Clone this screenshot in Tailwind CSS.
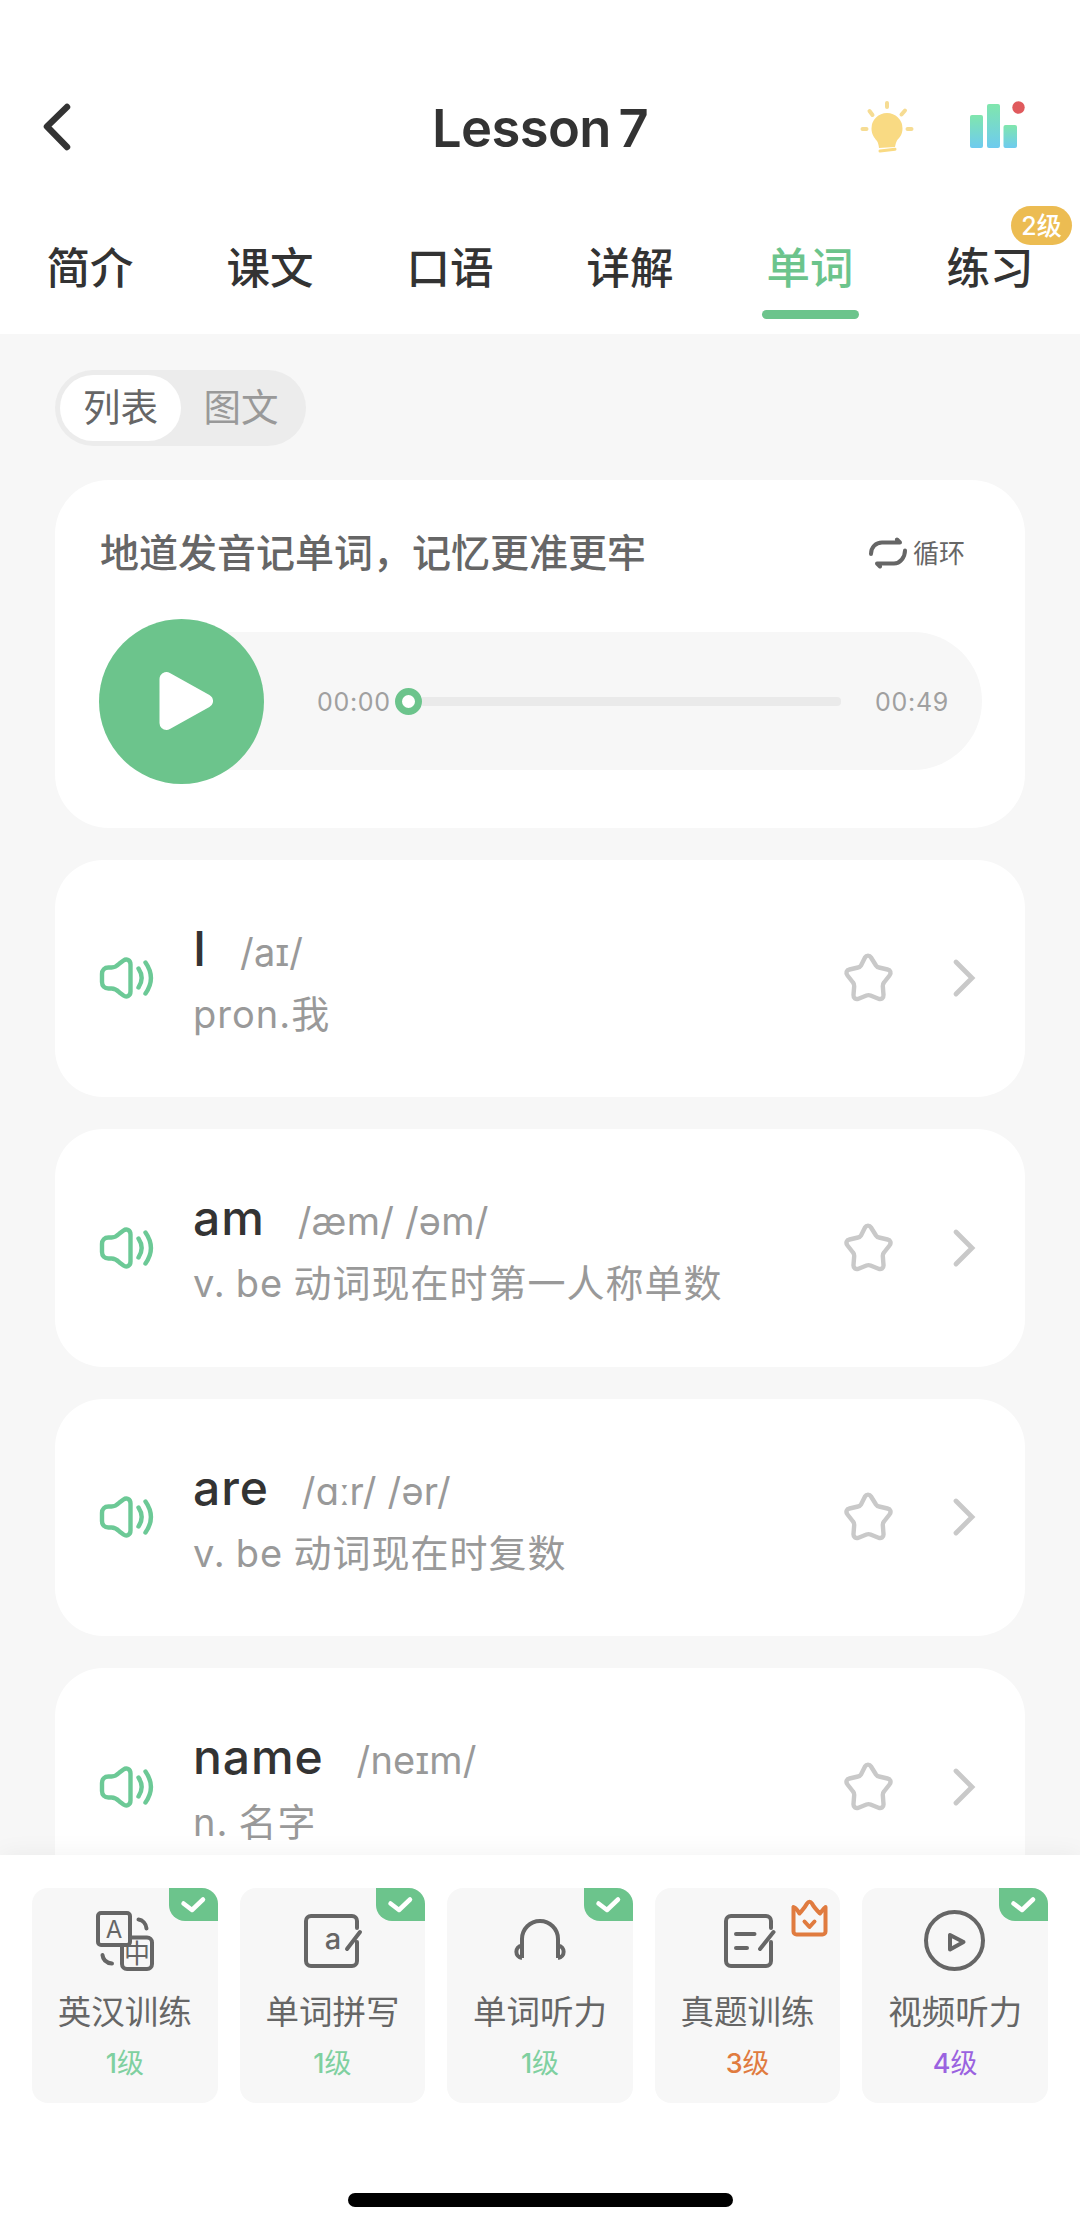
<!DOCTYPE html>
<html lang="zh-CN">
<head>
  <meta charset="UTF-8" />
  <meta name="viewport" content="width=device-width, initial-scale=1.0"/>
  <title>Lesson 7</title>
  <script src="https://cdn.jsdelivr.net/npm/@tailwindcss/browser@4"></script>
</head>
<body class="bg-[#f7f7f7] font-['Inter','Noto_Sans_CJK_SC',sans-serif] text-[#333]">
<div class="w-[1080px] h-[2228px] flex flex-col overflow-hidden">

  <!-- Header -->
  <header class="h-[334px] shrink-0 bg-white flex flex-col">
    <div class="mt-[84px] h-[88px] grid grid-cols-3 items-center">
      <svg class="ml-9 w-11 h-14" viewBox="0 0 44 56" fill="none" stroke="#333" stroke-width="6.5" stroke-linecap="round" stroke-linejoin="round"><path d="M31 7 11 26.500 31 47"/></svg>
      <h1 class="pt-px text-[52.500px] leading-none font-semibold text-center whitespace-nowrap tracking-[-0.6px] [word-spacing:-5px]">Lesson 7</h1>
      <div class="flex items-center justify-end pr-[52px] gap-[54px]">
        <svg class="w-14 h-14" viewBox="0 0 56 56" fill="none">
          <path d="M29 13a15.500 15.500 0 0 1 15.500 15.500c0 6-3 9-5.500 12-1 2-1.500 4-2 6.500L21 48c-.3-3-.8-5-2-7-3-3.500-5.500-7-5.500-12.500A15.500 15.500 0 0 1 29 13z" fill="#f9da83"/>
          <path d="M22 51 37 49.200" stroke="#f9da83" stroke-width="3" stroke-linecap="round"/>
          <path d="M29 3v4M11.500 11l3 4M47 10.500l-3.500 4M4.500 29h4M49.500 29h4" stroke="#f6dc93" stroke-width="4" stroke-linecap="round"/>
        </svg>
        <svg class="w-[60px] h-14" viewBox="0 0 60 56">
          <defs><linearGradient id="bars" x1="0" y1="0" x2="0" y2="1"><stop offset="0" stop-color="#80e6ad"/><stop offset="1" stop-color="#6ecbef"/></linearGradient></defs>
          <rect x="2" y="15" width="13" height="33" rx="2" fill="url(#bars)"/>
          <rect x="19" y="4" width="13" height="44" rx="2" fill="url(#bars)"/>
          <rect x="35.500" y="25" width="13.500" height="23" rx="2" fill="url(#bars)"/>
          <circle cx="50.500" cy="7.500" r="6.200" fill="#e05a5d"/>
        </svg>
      </div>
    </div>
    <!-- Tabs -->
    <nav class="mt-[64px] grid grid-cols-6 text-[43.500px] leading-[64px] font-medium text-center">
      <a>简介</a>
      <a>课文</a>
      <a>口语</a>
      <a>详解</a>
      <a class="text-[#6cc48c] flex flex-col items-center">单词<span class="mt-[10px] w-[97px] h-[9px] rounded-full bg-[#6cc48c]"></span></a>
      <a class="relative">练习<span class="absolute right-2 -top-[30px] w-[61px] h-[39px] rounded-full bg-[#ecbc52] text-white text-[25px] leading-[40px]">2级</span></a>
    </nav>
  </header>

  <main class="flex-1 min-h-0 overflow-hidden px-[55px] pt-9">
    <!-- List / picture switch -->
    <div class="w-[251px] h-[76px] rounded-full bg-[#ececec] p-[5px] flex text-[37.500px] leading-[65px] text-center">
      <span class="w-[121px] rounded-full bg-white text-[#666]">列表</span>
      <span class="w-[120px] text-[#999]">图文</span>
    </div>

    <!-- Player -->
    <section class="mt-[34px] h-[348px] rounded-[54px] bg-white pl-11 pr-[43px] pt-[43px]">
      <div class="flex items-center justify-between h-[60px]">
        <h2 class="ml-px text-[39px] font-medium text-[#666]">地道发音记单词，记忆更准更牢</h2>
        <div class="flex items-center gap-[5px] mr-[17px] text-[26px] text-[#666]">
          <svg class="w-10 h-8" viewBox="0 0 40 32" fill="none" stroke="#666" stroke-width="4" stroke-linecap="round" stroke-linejoin="round"><path d="M3 17C3 10 8 5.500 14 5.500H32L29 2.500M37 13.500c0 7-5 13-11 13H9L12 29.500"/></svg>
          循环
        </div>
      </div>
      <div class="mt-[35px] h-[166px] flex items-center">
        <div class="relative z-10 size-[165px] shrink-0 rounded-full bg-[#6cc48c] flex items-center justify-center">
          <svg class="ml-2 w-[54px] h-[60px]" viewBox="0 0 54 60" fill="#fff" stroke="#fff" stroke-width="14" stroke-linejoin="round"><path d="M7.500 8v44L47 30z"/></svg>
        </div>
        <div class="-ml-20 flex-1 h-[138px] rounded-r-full bg-[#f7f7f7] pl-[133px] pr-[33px] flex items-center text-[25px] text-[#a0a0a0]">
          <span class="w-[78px] pt-1 tracking-[0.700px]">00:00</span>
          <span class="size-[27px] shrink-0 rounded-full border-[7px] border-[#6cc48c] bg-white"></span>
          <span class="flex-1 h-[9px] rounded-r-sm bg-[#eaeaea]"></span>
          <span class="ml-[34px] pt-1 tracking-[0.700px]">00:49</span>
        </div>
      </div>
    </section>

    <!-- Word list, filled below -->
    <div id="words" class="mt-[31.500px] flex flex-col gap-8"></div>
  </main>

  <!-- Training bar -->
  <footer class="relative z-10 h-[373px] shrink-0 bg-white shadow-[0_0_24px_rgba(0,0,0,0.06)] flex flex-col">
    <div class="mx-8 mt-[33px] grid grid-cols-5 gap-[22px] text-center">

      <div class="relative h-[215px] rounded-2xl bg-[#f7f7f7] pt-[19px]">
        <svg class="mx-auto size-16" viewBox="0 0 64 64" fill="none" stroke="#666" stroke-width="4" stroke-linecap="round">
          <rect x="5" y="6" width="32" height="32" rx="3"/>
          <path d="M37 30.500h17a5 5 0 0 1 5 5V57a5 5 0 0 1-5 5H34a5 5 0 0 1-5-5V38"/>
          <path d="M45.500 12.500c4 .5 7.500 4 8 9M9.500 48c.5 5 4 8 9.500 8.500"/>
          <text x="21" y="30.500" text-anchor="middle" font-size="24" fill="#666" stroke="none">A</text>
          <text x="44" y="56" text-anchor="middle" font-size="26" fill="#666" stroke="none">中</text>
        </svg>
        <p class="mt-[17px] text-[33.500px] leading-[48px] text-[#666]">英汉训练</p>
        <p class="mt-[8px] text-[27px] leading-[40px] text-[#7fd0a0]"><span class="font-medium">1</span>级</p>
        <span class="absolute right-0 top-0 w-[49px] h-[33px] rounded-tr-2xl rounded-bl-2xl bg-[#6cc48c]"><svg viewBox="0 0 49 33" fill="none" stroke="#fff" stroke-width="4.500" stroke-linecap="round" stroke-linejoin="round"><path d="M14.500 15.500 23 22 34 11.500"/></svg></span>
      </div>

      <div class="relative h-[215px] rounded-2xl bg-[#f7f7f7] pt-[19px]">
        <svg class="mx-auto size-16" viewBox="0 0 64 64" fill="none" stroke="#666" stroke-width="4" stroke-linecap="round">
          <path d="M57 21v-7a5 5 0 0 0-5-5H11a5 5 0 0 0-5 5v40a5 5 0 0 0 5 5h41a5 5 0 0 0 5-5V35M60 25 47 42"/>
          <text x="33" y="42" text-anchor="middle" font-size="29" font-weight="500" fill="#666" stroke="none">a</text>
        </svg>
        <p class="mt-[17px] text-[33.500px] leading-[48px] text-[#666]">单词拼写</p>
        <p class="mt-[8px] text-[27px] leading-[40px] text-[#7fd0a0]"><span class="font-medium">1</span>级</p>
        <span class="absolute right-0 top-0 w-[49px] h-[33px] rounded-tr-2xl rounded-bl-2xl bg-[#6cc48c]"><svg viewBox="0 0 49 33" fill="none" stroke="#fff" stroke-width="4.500" stroke-linecap="round" stroke-linejoin="round"><path d="M14.500 15.500 23 22 34 11.500"/></svg></span>
      </div>

      <div class="relative h-[215px] rounded-2xl bg-[#f7f7f7] pt-[19px]">
        <svg class="mx-auto size-16" viewBox="0 0 64 64" fill="none" stroke="#666" stroke-width="4" stroke-linejoin="round">
          <path d="M14 51V32a18 18 0 0 1 36 0v19M14 38.500c-7.500 1-7.500 11.500 0 12.500M50 38.500c7.500 1 7.500 11.500 0 12.500"/>
        </svg>
        <p class="mt-[17px] text-[33.500px] leading-[48px] text-[#666]">单词听力</p>
        <p class="mt-[8px] text-[27px] leading-[40px] text-[#7fd0a0]"><span class="font-medium">1</span>级</p>
        <span class="absolute right-0 top-0 w-[49px] h-[33px] rounded-tr-2xl rounded-bl-2xl bg-[#6cc48c]"><svg viewBox="0 0 49 33" fill="none" stroke="#fff" stroke-width="4.500" stroke-linecap="round" stroke-linejoin="round"><path d="M14.500 15.500 23 22 34 11.500"/></svg></span>
      </div>

      <div class="relative h-[215px] rounded-2xl bg-[#f7f7f7] pt-[19px]">
        <svg class="mx-auto size-16" viewBox="0 0 64 64" fill="none" stroke="#666" stroke-width="4" stroke-linecap="round">
          <path d="M55 21v-7a5 5 0 0 0-5-5H15a5 5 0 0 0-5 5v40a5 5 0 0 0 5 5h35a5 5 0 0 0 5-5V35M57.500 25 44 42M20 27h18.500M20 41h11"/>
        </svg>
        <p class="mt-[17px] text-[33.500px] leading-[48px] text-[#666]">真题训练</p>
        <p class="mt-[8px] text-[27px] leading-[40px] text-[#e07b3f]"><span class="font-medium">3</span>级</p>
        <svg class="absolute right-[12px] top-[11px] w-[38px] h-[38px]" viewBox="0 0 38 38" fill="none" stroke="#e07b3f" stroke-width="4" stroke-linecap="round" stroke-linejoin="round"><path d="M3.500 8v24.500a3 3 0 0 0 3 3h26a3 3 0 0 0 3-3V8c-2 1-3.500 4-5.500 6.500-3-3-6-6-8-10-1.500-2.500-3.500-2.500-5 0-2 4-5 7-7.500 10C8 11.500 6 9 3.500 8zM14.500 22.500l5 5.500 5-5.500"/></svg>
      </div>

      <div class="relative h-[215px] rounded-2xl bg-[#f7f7f7] pt-[19px]">
        <svg class="mx-auto size-16" viewBox="0 0 64 64" fill="none" stroke="#666" stroke-width="4" stroke-linejoin="round">
          <circle cx="31.500" cy="33.500" r="28.500"/><path d="M27 28v14.500L40.500 35z"/>
        </svg>
        <p class="mt-[17px] text-[33.500px] leading-[48px] text-[#666]">视频听力</p>
        <p class="mt-[8px] text-[27px] leading-[40px] text-[#9a62e0]"><span class="font-medium">4</span>级</p>
        <span class="absolute right-0 top-0 w-[49px] h-[33px] rounded-tr-2xl rounded-bl-2xl bg-[#6cc48c]"><svg viewBox="0 0 49 33" fill="none" stroke="#fff" stroke-width="4.500" stroke-linecap="round" stroke-linejoin="round"><path d="M14.500 15.500 23 22 34 11.500"/></svg></span>
      </div>
    </div>
    <div class="mt-auto mb-[21px] mx-auto w-[385px] h-[14px] rounded-full bg-black"></div>
  </footer>
</div>

<script>
  const words = [
    { word: "I", ipa: "/aɪ/", mean: "pron.我" },
    { word: "am", ipa: "/æm/ /əm/", mean: "v. be 动词现在时第一人称单数" },
    { word: "are", ipa: "/ɑːr/ /ər/", mean: "v. be 动词现在时复数" },
    { word: "name", ipa: "/neɪm/", mean: "n. 名字" },
  ];

  document.getElementById("words").innerHTML = words.map(w => `
    <article class="h-[237.500px] shrink-0 rounded-[48px] bg-white flex items-center pl-11 pr-[46px]">
      <svg class="w-14 h-12 shrink-0" viewBox="0 0 56 48" fill="none" stroke="#6cc996" stroke-width="4.400" stroke-linecap="round">
        <path d="M9.500 13.500h3c4 0 5.500-1.500 8-4l4-3c3-2 7-.5 7 4v27c0 4.500-4 6-7 4l-4-3c-2.500-2.500-4-4-8-4h-3c-4 0-6.500-2.500-6.500-6.500v-8c0-4 2.500-6.500 6.500-6.500z"/>
        <path d="M39.500 14.500c4 6 4 13 0 19M46.500 8.500c7 10 7 21 0 31"/>
      </svg>
      <div class="ml-[38px] pt-[5px] flex-1 whitespace-nowrap">
        <p class="leading-[64px] flex items-baseline"><span class="text-[48px] font-medium tracking-[0.900px]">${w.word}</span><span class="ml-[33px] text-[38px] tracking-[0.200px] text-[#999]">${w.ipa}</span></p>
        <p class="-mt-px text-[38px] leading-[62px] tracking-[1px] [word-spacing:-1.500px] text-[#999]">${w.mean}</p>
      </div>
      <svg class="size-14 shrink-0" viewBox="0 0 56 56" fill="none" stroke="#c9c9c9" stroke-width="4.400" stroke-linejoin="round"><path d="M25 7.500c1.500-2.500 4.500-2.500 6 0l5 8c.8 1.200 1.600 1.800 3 2l8.500 2c3 .7 4 3.500 2 6l-5.500 7c-1 1.200-1.300 2-1.200 3.500l.7 9c.2 3-2.200 4.800-5 3.700l-8-3.200c-1.600-.6-2.400-.6-4 0l-8 3.200c-2.800 1.100-5.200-.7-5-3.700l.7-9c.1-1.500-.2-2.300-1.200-3.500l-5.500-7c-2-2.500-1-5.300 2-6l8.500-2c1.400-.2 2.200-.8 3-2z"/></svg>
      <svg class="ml-[55px] w-7 h-10 shrink-0" viewBox="0 0 28 40" fill="none" stroke="#c9c9c9" stroke-width="4.800" stroke-linecap="round"><path d="M5 4 21 20 5 36"/></svg>
    </article>`).join("");
</script>
</body>
</html>
